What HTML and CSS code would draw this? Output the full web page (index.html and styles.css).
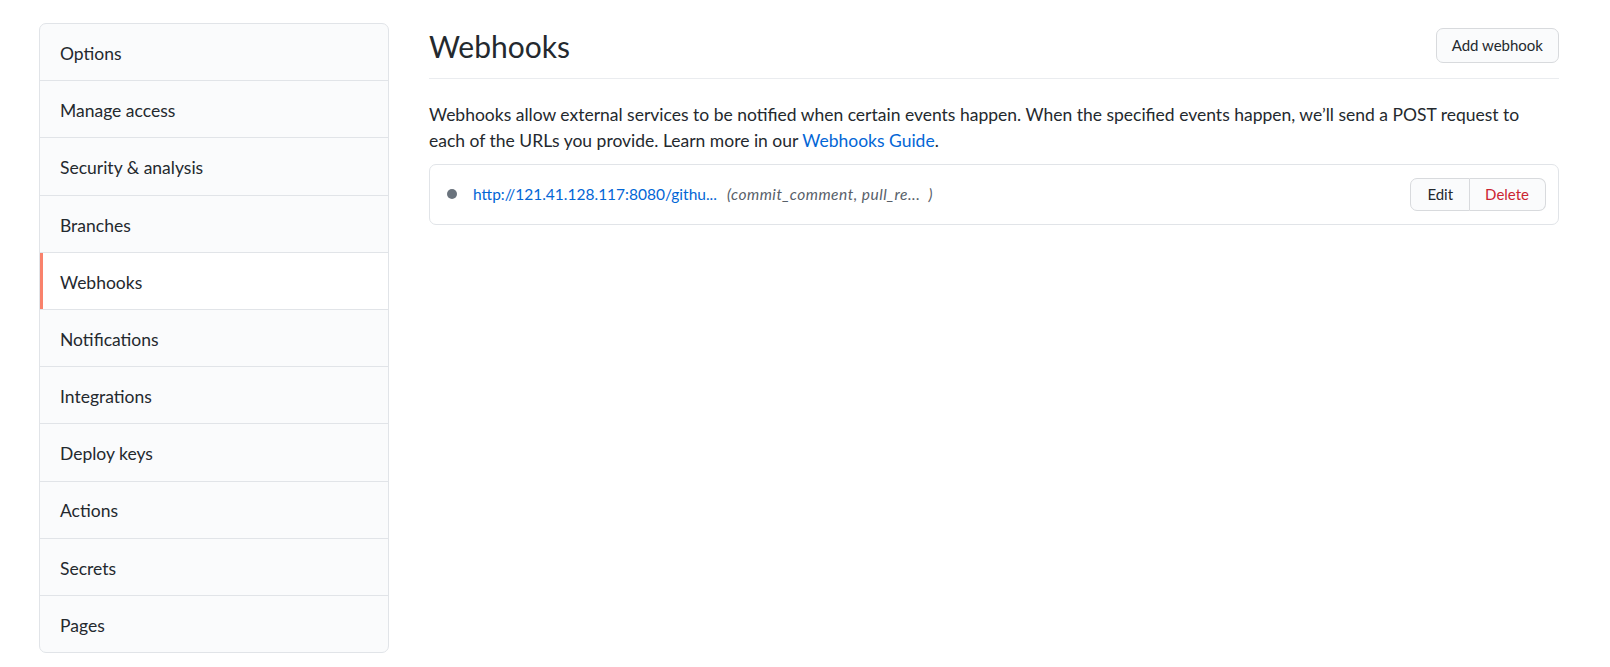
FILE: index.html
```html
<!DOCTYPE html>
<html lang="en">
<head>
<meta charset="utf-8">
<title>Webhooks</title>
<link rel="stylesheet" href="styles.css">
</head>
<body>
<div class="page">
  <nav class="menu">
    <a class="menu-item">Options</a>
    <a class="menu-item">Manage access</a>
    <a class="menu-item">Security &amp; analysis</a>
    <a class="menu-item">Branches</a>
    <a class="menu-item selected">Webhooks</a>
    <a class="menu-item">Notifications</a>
    <a class="menu-item">Integrations</a>
    <a class="menu-item">Deploy keys</a>
    <a class="menu-item">Actions</a>
    <a class="menu-item">Secrets</a>
    <a class="menu-item">Pages</a>
  </nav>
  <main class="main">
    <div class="subhead">
      <h2 class="subhead-title">Webhooks</h2>
      <a class="btn">Add webhook</a>
    </div>
    <p class="intro">Webhooks allow external services to be notified when certain events happen. When the specified events happen, we’ll send a POST request to<br>each of the URLs you provide. Learn more in our <a class="link">Webhooks Guide</a>.</p>
    <div class="box">
      <div class="hook-row">
        <span class="dot"></span>
        <a class="hook-url">http://121.41.128.117:8080/githu...</a>
        <span class="hook-events">(commit_comment, pull_re...&nbsp; )</span>
        <div class="btn-group">
          <a class="btn btn-sm">Edit</a>
          <a class="btn btn-sm btn-danger">Delete</a>
        </div>
      </div>
    </div>
  </main>
</div>
</body>
</html>
```

FILE: styles.css
```css
* { box-sizing: border-box; }

html, body {
  margin: 0;
  background: #ffffff;
}

body {
  font-family: Lato, "Liberation Sans", sans-serif;
  color: #24292e;
  font-size: 17.5px;
  line-height: 1.5;
}

.page {
  display: flex;
  align-items: flex-start;
  gap: 40px;
  padding: 23px 0 0 39px;
}

.menu {
  width: 350px;
  flex: none;
  border: 1px solid #e1e4e8;
  border-radius: 7px;
  background: #fafbfc;
  overflow: hidden;
  display: flex;
  flex-direction: column;
}

.menu-item {
  position: relative;
  display: flex;
  align-items: center;
  height: 56.2px;
  padding: 4px 20px 0;
  color: #24292e;
  font-size: 17.5px;
  text-decoration: none;
}

.menu-item + .menu-item {
  border-top: 1px solid #e1e4e8;
  height: 57.2px;
}

.menu-item.selected {
  background: #ffffff;
}

.menu-item.selected::before {
  content: "";
  position: absolute;
  left: 0;
  top: 0;
  bottom: 0;
  width: 3px;
  background: #f9826c;
}

.main {
  width: 1130px;
  flex: none;
}

.subhead {
  display: flex;
  align-items: center;
  justify-content: space-between;
  padding-bottom: 10px;
  border-bottom: 1px solid #eaecef;
  margin-bottom: 23px;
}

.subhead-title {
  margin: 0;
  padding-top: 2px;
  font-size: 30px;
  font-weight: 400;
  line-height: 43px;
}

.btn {
  display: inline-flex;
  align-items: center;
  justify-content: center;
  height: 34.5px;
  padding: 0 15px;
  font-size: 15px;
  color: #24292e;
  background: #fafbfc;
  border: 1px solid #d8dadd;
  border-radius: 7px;
  text-decoration: none;
  white-space: nowrap;
}

.intro {
  margin: 0 0 9px;
  font-size: 17.5px;
  line-height: 26.25px;
}

.link {
  color: #0366d6;
  text-decoration: none;
}

.box {
  border: 1px solid #e1e4e8;
  border-radius: 7px;
  background: #fff;
}

.hook-row {
  display: flex;
  align-items: center;
  height: 59.4px;
  padding: 0 12px 0 17px;
}

.dot {
  width: 10px;
  height: 10px;
  border-radius: 50%;
  background: #6a737d;
  flex: none;
  margin-right: 16px;
}

.hook-url {
  color: #0366d6;
  font-size: 15.5px;
  text-decoration: none;
}

.hook-events {
  margin-left: 10px;
  color: #586069;
  font-size: 15.5px;
  font-style: italic;
  letter-spacing: 0.5px;
}

.btn-group {
  margin-left: auto;
  display: flex;
}

.btn-sm {
  height: 32.7px;
  padding: 0 16px;
}

.btn-group .btn:first-child {
  border-radius: 7px 0 0 7px;
}

.btn-group .btn:last-child {
  border-radius: 0 7px 7px 0;
  border-left: 0;
  padding: 0 16px 0 15px;
}

.btn-danger {
  color: #cb2431;
}
```
